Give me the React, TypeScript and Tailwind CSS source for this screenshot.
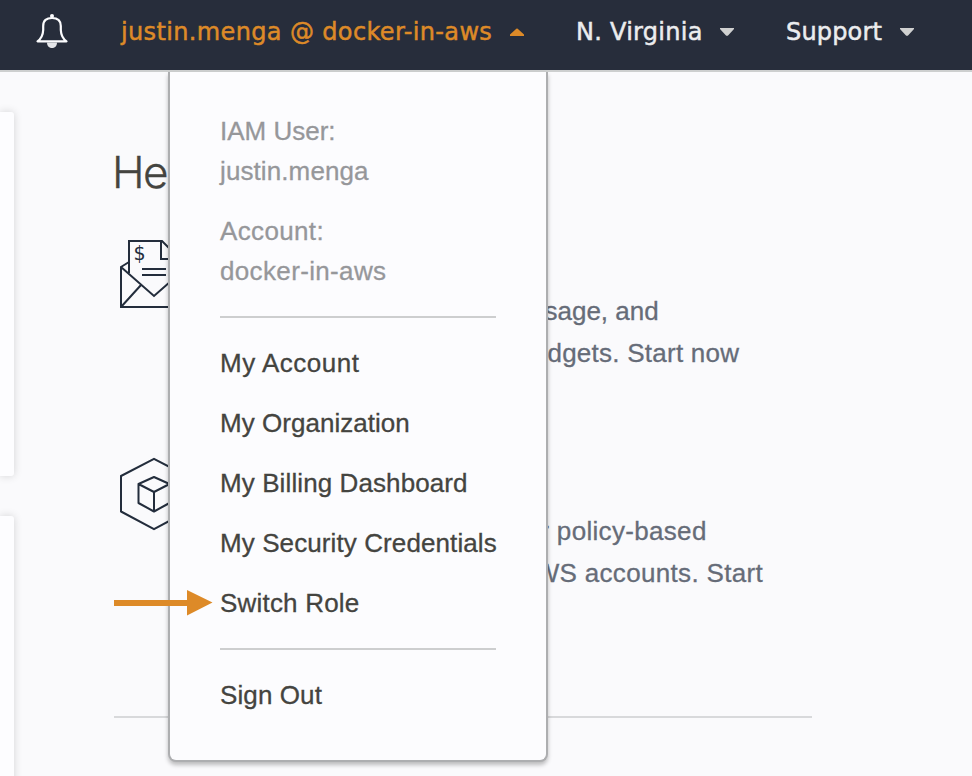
import type { ReactNode } from "react";

function Bell() {
  return (
    <svg width="36" height="40" viewBox="0 1 36 40" fill="none" className="shrink-0">
      <circle cx="18" cy="6" r="2" fill="#fcfcfe" />
      <path
        d="M3.500 31.300C6.800 29 8.900 26.500 9.200 20V16C9.200 10.500 12.500 8 18 8S26.800 10.500 26.800 16V20C27.100 26.500 29.200 29 32.500 31.300Z"
        stroke="#fcfcfe"
        strokeWidth="2.200"
        strokeLinejoin="round"
      />
      <path d="M13 32.500H23C23 36.500 20.500 38 18 38S13 36.500 13 32.500Z" fill="#e4e5e8" />
    </svg>
  );
}

function Caret({ up = false }: { up?: boolean }) {
  return (
    <svg width="14" height="8" viewBox="0 0 14 8" className="mt-0.5 shrink-0">
      {up ? (
        <path d="M0 8V6.500L5.500 1.500Q7-.5 8.500 1.500L14 6.500V8Z" fill="#dd8a28" />
      ) : (
        <path d="M0 0H14V1L8.500 7Q7 8.700 5.500 7L0 1Z" fill="#cfd0d0" />
      )}
    </svg>
  );
}

function EnvelopeIcon() {
  return (
    <svg width="80" height="72" viewBox="114 238 80 72" fill="none" stroke="#232d3c" strokeWidth="2">
      <path d="M129 273V241H162L180 259M161 241V259H180" />
      <path d="M129 262L121 267V307H187V267L154 296L121 267M121 307L141 285" />
      <path d="M142 269H166M142 275H166" />
      <text
        x="133.500"
        y="260"
        fill="#232d3c"
        stroke="none"
        className="font-['DejaVu_Sans',sans-serif] text-[19px]"
      >
        $
      </text>
    </svg>
  );
}

function CubeIcon() {
  return (
    <svg width="80" height="76" viewBox="114 456 80 76" fill="none" stroke="#232d3c" strokeWidth="2" strokeLinejoin="round">
      <path d="M154 458.800L187 476V511.500L154 529.200L121 511.500V476Z" />
      <path d="M154 477L169.500 484V503L154 511.500L138.500 503V484ZM138.500 484L154 492L169.500 484M154 492V511" />
    </svg>
  );
}

function MenuItem({ children, className = "tracking-[0.1px]" }: { children: ReactNode; className?: string }) {
  return (
    <a className="flex h-[60px] items-center whitespace-nowrap text-[#444440]">
      <span className={className}>{children}</span>
    </a>
  );
}

export default function App() {
  return (
    <div className="relative flex h-[776px] w-[972px] flex-col overflow-hidden bg-[#fafafc] font-['Liberation_Sans',Arial,sans-serif] text-[26px] [-webkit-text-stroke:0.3px]">
      <header className="flex h-[72px] shrink-0 items-center border-b-2 border-[#cdcfcf] bg-[#272d3b] pb-2 pl-[34px] font-['DejaVu_Sans',Verdana,sans-serif] text-[24px] text-[#ebecee] [-webkit-text-stroke:0.5px]">
        <Bell />
        <div className="ml-[51px] flex w-[403px] items-center justify-between whitespace-nowrap text-[#dd8a28]">
          <span className="pt-0.5 tracking-[0.36px]">justin.menga @ docker-in-aws</span>
          <Caret up />
        </div>
        <div className="ml-[52px] flex w-[158px] items-center justify-between whitespace-nowrap">
          <span className="pt-0.5 tracking-[0.27px]">N. Virginia</span>
          <Caret />
        </div>
        <div className="ml-[52px] flex w-[128px] items-center justify-between whitespace-nowrap">
          <span className="pt-0.5 tracking-[0.17px]">Support</span>
          <Caret />
        </div>
      </header>

      <div className="flex min-h-0 flex-1">
        <aside className="flex w-[14px] shrink-0 flex-col gap-10 pt-10">
          <div className="h-[364px] shrink-0 rounded-r-[3px] bg-[#fdfdff] shadow-[0_0_8px_rgba(0,0,0,0.16)]" />
          <div className="h-[300px] shrink-0 rounded-r-[3px] bg-[#fdfdff] shadow-[0_0_8px_rgba(0,0,0,0.16)]" />
        </aside>
        <main className="ml-[100px] h-[646px] w-[698px] shrink-0 border-b-2 border-[#d8d9db] text-[#666c78]">
          <h1 className="mt-[75px] -ml-0.5 h-[50px] font-['Inter','Liberation_Sans',sans-serif] text-[44px] leading-[50px] font-light tracking-[-1.500px] text-[#444440]">
            He
          </h1>
          <section className="mt-[41px] flex h-[218px] justify-between">
            <EnvelopeIcon />
            <div className="mt-[52px] w-[281px] leading-[42px] whitespace-nowrap">
              <p className="-ml-px">usage, and</p>
              <p className="-ml-[13px] tracking-[0.250px]">
                budgets. <a>Start now</a>
              </p>
            </div>
          </section>
          <section className="flex justify-between">
            <CubeIcon />
            <div className="mt-[54px] w-[300px] leading-[42px] whitespace-nowrap">
              <p className="ml-[6px] tracking-[0.320px]">for policy-based</p>
              <p className="ml-[6px] tracking-[0.320px]">
                AWS accounts. <a>Start</a>
              </p>
            </div>
          </section>
        </main>
      </div>

      <nav className="absolute top-[72px] left-[168px] h-[690px] w-[380px] rounded-b-[8px] border-2 border-t-0 border-[#adaeb0] bg-[#fcfcfe] px-[50px] pt-[39px] shadow-[0_3px_4px_rgba(0,0,0,0.25)]">
        <div className="leading-[40px] text-[#96979a]">
          <p>IAM User:</p>
          <p className="tracking-[0.1px]">justin.menga</p>
          <p className="mt-5 tracking-[0.350px]">Account:</p>
          <p className="tracking-[0.350px]">docker-in-aws</p>
        </div>
        <div className="mt-[25px] mb-[15px] h-0.5 bg-[#cdcecf]" />
        <MenuItem className="tracking-[0.500px]">My Account</MenuItem>
        <MenuItem className="tracking-[0.030px]">My Organization</MenuItem>
        <MenuItem>My Billing Dashboard</MenuItem>
        <MenuItem>My Security Credentials</MenuItem>
        <MenuItem className="tracking-[0.200px]">Switch Role</MenuItem>
        <div className="my-[15px] h-0.5 bg-[#cdcecf]" />
        <MenuItem>Sign Out</MenuItem>
      </nav>

      <svg className="absolute top-[588px] left-[112px]" width="102" height="30" viewBox="112 588 102 30">
        <path d="M114 600H187V590L212.500 602.500L187 615.500V606H114Z" fill="#dd8a28" />
      </svg>
    </div>
  );
}
